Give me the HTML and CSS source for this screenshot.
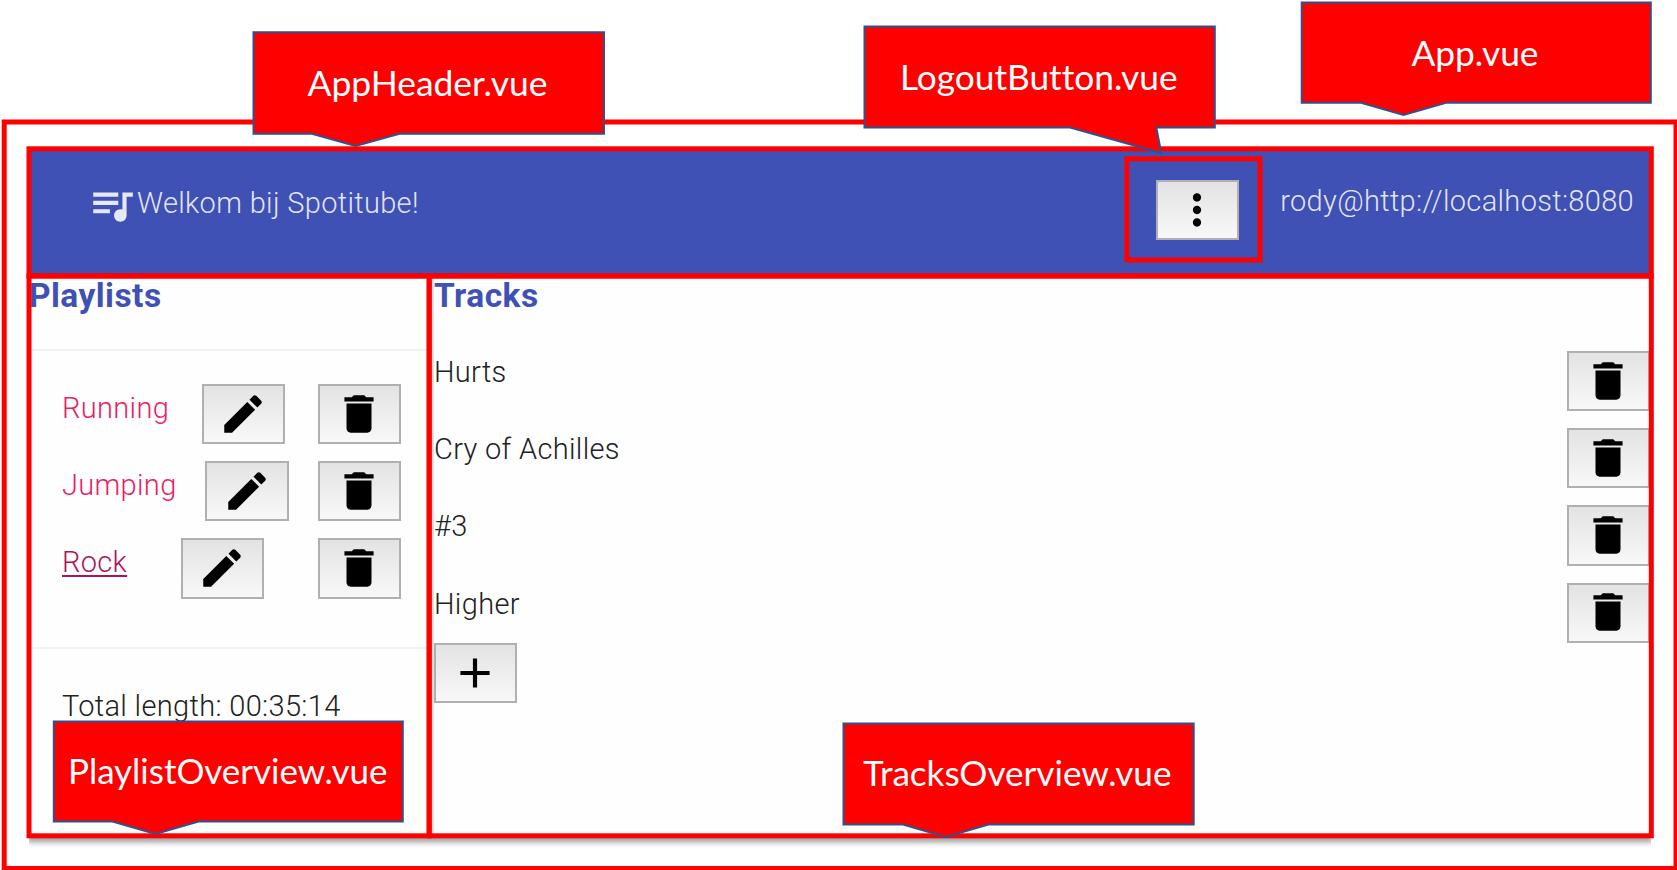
FILE: index.html
```html
<!DOCTYPE html>
<html lang="nl">
<head>
<meta charset="utf-8">
<title>Spotitube</title>
<link rel="stylesheet" href="styles.css">
</head>
<body>
<svg class="sprite" aria-hidden="true">
  <symbol id="music" viewBox="0 0 24 24"><path d="M15 6H3v2h12V6zm0 4H3v2h12v-2zM3 16h8v-2H3v2zM17 6v8.18c-.31-.11-.65-.18-1-.18-1.66 0-3 1.34-3 3s1.34 3 3 3 3-1.34 3-3V8h3V6h-5z"/></symbol>
  <symbol id="more" viewBox="0 0 24 24"><path d="M12 8c1.1 0 2-.9 2-2s-.9-2-2-2-2 .9-2 2 .9 2 2 2zm0 2c-1.100 0-2 .9-2 2s.9 2 2 2 2-.9 2-2-.9-2-2-2zm0 6c-1.100 0-2 .9-2 2s.9 2 2 2 2-.9 2-2-.9-2-2-2z"/></symbol>
  <symbol id="edit" viewBox="0 0 24 24"><path d="M3 17.250V21h3.750L17.810 9.940l-3.750-3.750L3 17.250zM20.710 7.040c.39-.39.39-1.020 0-1.410l-2.340-2.340c-.39-.39-1.020-.39-1.410 0l-1.830 1.830 3.750 3.750 1.830-1.830z"/></symbol>
  <symbol id="delete" viewBox="0 0 24 24"><path d="M6 19c0 1.100.9 2 2 2h8c1.100 0 2-.9 2-2V7H6v12zM19 4h-3.500l-1-1h-5l-1 1H5v2h14V4z"/></symbol>
  <symbol id="add" viewBox="0 0 24 24"><path d="M19 13h-6v6h-2v-6H5v-2h6V5h2v6h6v2z"/></symbol>
</svg>

<div class="app">
  <header class="app-header">
    <div class="brand"><svg class="icon"><use href="#music"/></svg><span class="welcome">Welkom bij Spotitube!</span></div>
    <button class="btn btn-logout"><svg class="icon"><use href="#more"/></svg></button>
    <span class="user">rody@http://localhost:8080</span>
  </header>
  <main class="content">
    <section class="playlists">
      <h2 class="title">Playlists</h2>
      <ul class="playlist-list">
        <li class="playlist"><a class="link">Running</a><button class="btn"><svg class="icon"><use href="#edit"/></svg></button><button class="btn"><svg class="icon"><use href="#delete"/></svg></button></li>
        <li class="playlist"><a class="link">Jumping</a><button class="btn"><svg class="icon"><use href="#edit"/></svg></button><button class="btn"><svg class="icon"><use href="#delete"/></svg></button></li>
        <li class="playlist"><a class="link link-active">Rock</a><button class="btn"><svg class="icon"><use href="#edit"/></svg></button><button class="btn"><svg class="icon"><use href="#delete"/></svg></button></li>
      </ul>
      <p class="total">Total length: 00:35:14</p>
    </section>
    <section class="tracks">
      <h2 class="title">Tracks</h2>
      <ul class="track-list">
        <li class="track"><span>Hurts</span><button class="btn"><svg class="icon"><use href="#delete"/></svg></button></li>
        <li class="track"><span>Cry of Achilles</span><button class="btn"><svg class="icon"><use href="#delete"/></svg></button></li>
        <li class="track"><span>#3</span><button class="btn"><svg class="icon"><use href="#delete"/></svg></button></li>
        <li class="track"><span>Higher</span><button class="btn"><svg class="icon"><use href="#delete"/></svg></button></li>
      </ul>
      <button class="btn btn-add"><svg class="icon"><use href="#add"/></svg></button>
    </section>
  </main>
</div>

<!-- Component outlines and their labels -->
<svg class="annotations" width="1677" height="870" viewBox="0 0 1677 870">
  <g class="frames">
    <rect x="4.200" y="122" width="1671.800" height="746.500"/>
    <rect x="29" y="148.800" width="1622.300" height="127.200"/>
    <rect x="29" y="276" width="400.200" height="559.800"/>
    <rect x="429.200" y="276" width="1222.100" height="559.800"/>
    <rect x="1126.800" y="158.800" width="133.200" height="101.200"/>
  </g>
  <g class="bubbles">
    <path d="M253.500 32.300H604V133.800H399.500L355.500 146L312 133.800H253.500Z"/>
    <path d="M864.500 26.500H1214.800V127.500H1156.300L1161.300 153L1070 127.500H864.500Z"/>
    <path d="M1301.700 2.500H1650.800V102.700H1446L1403.500 115L1361 102.700H1301.700Z"/>
    <path d="M53.800 721.500H402.800V821.500H198.500L155.500 834L112.500 821.500H53.800Z"/>
    <path d="M843.500 723.500H1193.700V824.500H988.500L945.700 837L903 824.500H843.500Z"/>
  </g>
  <g class="labels">
    <text x="307.500" y="95.500" textLength="240" lengthAdjust="spacingAndGlyphs">AppHeader.vue</text>
    <text x="900" y="90" textLength="277.500" lengthAdjust="spacingAndGlyphs">LogoutButton.vue</text>
    <text x="1411.500" y="65.500" textLength="127" lengthAdjust="spacingAndGlyphs">App.vue</text>
    <text x="68" y="784" textLength="319.500" lengthAdjust="spacingAndGlyphs">PlaylistOverview.vue</text>
    <text x="863" y="786" textLength="308.500" lengthAdjust="spacingAndGlyphs">TracksOverview.vue</text>
  </g>
</svg>
</body>
</html>
```
FILE: styles.css
```css
* { box-sizing: border-box; }

body {
  margin: 0;
  width: 1677px;
  height: 870px;
  overflow: hidden;
  padding: 149px 0 0 29px;
  background: #fff;
  color: #212121;
  font: 300 29px/40px Roboto, sans-serif;
  letter-spacing: .33px;
}

.sprite { display: none; }

.app {
  display: flex;
  flex-direction: column;
  width: 1622px;
  height: 687px;
}

.app-header {
  display: flex;
  align-items: flex-start;
  flex: 0 0 127px;
  padding: 31px 17px 0 58px;
  background: #3f51b5;
  color: rgba(255, 255, 255, .87);
}

.brand { display: flex; margin-right: auto; }
.welcome { margin-top: 3px; }
.user { margin: 1px 0 0 41px; }
.welcome, .user { white-space: nowrap; }

.icon { display: block; width: 50px; height: 50px; fill: currentColor; }

.btn {
  display: flex;
  align-items: center;
  justify-content: center;
  flex: none;
  width: 83.300px;
  height: 60.300px;
  padding: 0 1px 1px 0;
  border: 2px solid #b0b0b0;
  background: linear-gradient(#e3e3e3, #f8f8f8);
  color: #000;
}

.content { display: flex; flex: 1; background: #fefefe; box-shadow: 0 4px 6px 2px rgba(0, 0, 0, .4); clip-path: inset(0 0 -14px 0); }

.title {
  margin: 0;
  font-size: 33.500px;
  line-height: 40px;
  font-weight: 700;
  letter-spacing: .45px;
  color: #3f51b5;
}

.playlists { flex: 0 0 403px; }

.playlist-list {
  display: flex;
  flex-direction: column;
  gap: 16.900px;
  height: 300px;
  margin: 33px 0 0;
  padding: 33px 31px 0 33px;
  border: 2px solid #f2f2f2;
  border-width: 2px 0;
  list-style: none;
}

.playlist { display: flex; justify-content: space-between; }

.link { margin-top: 4px; color: #e91e63; }
.link-active { color: #ad1457; text-decoration: underline; text-decoration-thickness: 2px; text-underline-offset: 3px; }

.total { margin: 37px 0 0 33px; }

.tracks { flex: 1; padding-right: 1px; border-left: 2px solid #e0e0e0; }

.track-list {
  display: flex;
  flex-direction: column;
  gap: 16.900px;
  margin: 35px 0 0;
  padding: 0;
  list-style: none;
}

.track { display: flex; justify-content: space-between; }
.track span { margin-top: 1px; }

.annotations { position: absolute; left: 0; top: 0; }
.frames { fill: none; stroke: #f00; stroke-width: 5; }
.bubbles { fill: #f00; stroke: #2f528f; stroke-width: 2; }
.labels { fill: #fff; font: 400 34px Lato, sans-serif; letter-spacing: 0; font-variant-ligatures: none; }
```
